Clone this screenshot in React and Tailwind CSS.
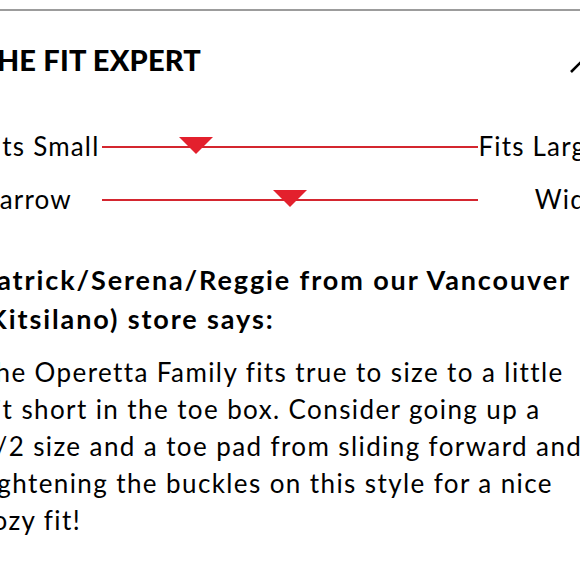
import React from "react";

const Marker = ({ pos }) => (
  <svg
    className="absolute top-[-9px]"
    style={{ left: `calc(${pos}% - 17px)` }}
    width="34"
    height="17"
    viewBox="0 0 34 17"
  >
    <polygon points="0,0 34,0 17,17" fill="#e3202d" />
  </svg>
);

const FitRow = ({ left, right, pos }) => (
  <div className="flex items-center h-[53px] text-[26px] tracking-[1.2px]">
    <div className="w-[123px] whitespace-nowrap">{left}</div>
    <div className="relative flex-1 h-[2px] bg-[#d4262f]">
      <Marker pos={pos} />
    </div>
    <div className="w-[123px] whitespace-nowrap text-right">{right}</div>
  </div>
);

export default function App() {
  return (
    <div className="w-[580px] h-[580px] overflow-hidden bg-white text-black font-['Lato',sans-serif]">
      <div className="h-[9px]" />
      <div className="h-[2px] bg-[#9c9c9c]" />

      <div className="-ml-[21px] w-[622px]">
        {/* header */}
        <div className="flex items-center mt-[31px] h-[36px]">
          <h2 className="text-[29px] leading-[36px] font-black tracking-[0.2px] whitespace-nowrap">
            THE FIT EXPERT
          </h2>
          <svg
            className="ml-auto mr-[-6px] mt-[6px] shrink-0"
            width="38"
            height="22"
            viewBox="0 0 38 22"
          >
            <polyline
              points="2,20 19,3 36,20"
              fill="none"
              stroke="#000"
              strokeWidth="2.6"
            />
          </svg>
        </div>

        {/* fit scale */}
        <div className="mt-[42px]">
          <FitRow left="Fits Small" right="Fits Large" pos={25} />
          <FitRow left="Narrow" right="Wide" pos={50} />
        </div>

        {/* quote */}
        <p className="mt-[34px] text-[27px] leading-[39px] font-bold tracking-[1.9px] whitespace-nowrap">
          Patrick/Serena/Reggie from our Vancouver
          <br />
          (Kitsilano) store says:
        </p>
        <p className="mt-[16px] text-[26px] leading-[37px] tracking-[1.4px] whitespace-nowrap">
          The Operetta Family fits true to size to a little
          <br />
          bit short in the toe box. Consider going up a
          <br />
          1/2 size and a toe pad from sliding forward and
          <br />
          tightening the buckles on this style for a nice
          <br />
          cozy fit!
        </p>
      </div>
    </div>
  );
}
